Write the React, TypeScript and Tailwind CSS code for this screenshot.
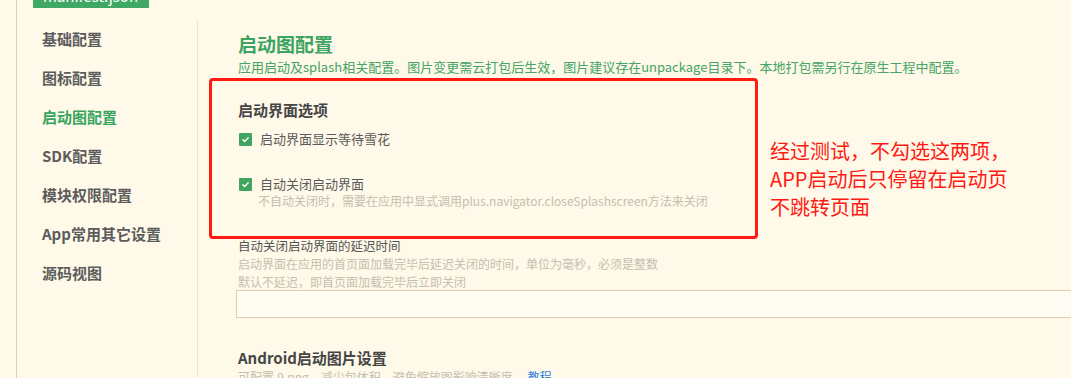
import React from "react";

const font = { fontFamily: '"Noto Sans CJK SC", "Noto Sans", sans-serif' };

function Check() {
  return (
    <span className="flex h-[13px] w-[13px] shrink-0 items-center justify-center rounded-[1px] bg-[#3fa561]">
      <svg width="9" height="9" viewBox="0 0 10 10" fill="none">
        <path d="M2 5.2 L4.1 7.2 L8 3" stroke="#fff" strokeWidth="1.5" strokeLinecap="round" strokeLinejoin="round" />
      </svg>
    </span>
  );
}

export default function App() {
  const nav = ["基础配置", "图标配置", "启动图配置", "SDK配置", "模块权限配置", "App常用其它设置", "源码视图"];
  return (
    <div className="relative flex h-[378px] w-[1071px] overflow-hidden bg-[#fef9e8]" style={font}>
      <div className="w-[17px] shrink-0 border-r border-[#ddd2ac]" />
      <div className="flex w-[180px] shrink-0 flex-col">
        <div className="ml-[16px] h-[8px] w-[116px] overflow-hidden bg-[#3fa864]">
          <div className="mt-[-14px] pl-[10px] text-[15px] leading-[20px] text-white">manifest.json</div>
        </div>
        <div className="flex flex-col pt-[12px]">
          {nav.map((n, i) => (
            <div
              key={n}
              className={`flex h-[39px] items-center pl-[25px] text-[15px] font-bold ${i === 2 ? "text-[#37a460]" : "text-[#5c5c5c]"}`}
            >
              {n}
            </div>
          ))}
        </div>
      </div>
      <div className="mt-[20px] w-px shrink-0 bg-[#efe6cc]" />
      <div className="flex min-w-0 flex-1 flex-col pl-[40px] pt-[31px]">
        <div className="text-[19px] font-bold leading-[26px] text-[#3ba461]">启动图配置</div>
        <div className="mt-[1px] whitespace-nowrap text-[13px] leading-[18px] text-[#45a466]">
          应用启动及splash相关配置。图片变更需云打包后生效，图片建议存在unpackage目录下。本地打包需另行在原生工程中配置。
        </div>
        <div className="mt-[24px] text-[15px] font-bold leading-[20px] text-[#454545]">启动界面选项</div>
        <div className="mt-[10px] flex h-[18px] items-center gap-[8px] pl-[1px]">
          <Check />
          <span className="text-[13px] text-[#5a5a5a]">启动界面显示等待雪花</span>
        </div>
        <div className="mt-[27px] flex h-[18px] items-center gap-[8px] pl-[1px]">
          <Check />
          <span className="text-[13px] text-[#5a5a5a]">自动关闭启动界面</span>
        </div>
        <div className="pl-[20px] text-[12px] leading-[16px] text-[#c4bfb0]">
          不自动关闭时，需要在应用中显式调用plus.navigator.closeSplashscreen方法来关闭
        </div>
        <div className="mt-[28px] text-[12.5px] leading-[18px] text-[#555]">自动关闭启动界面的延迟时间</div>
        <div className="text-[12px] leading-[18px] text-[#c4bfb0]">启动界面在应用的首页面加载完毕后延迟关闭的时间，单位为毫秒，必须是整数</div>
        <div className="text-[12px] leading-[18px] text-[#c4bfb0]">默认不延迟，即首页面加载完毕后立即关闭</div>
        <div className="ml-[-2px] mt-[-1px] h-[28px] w-[900px] shrink-0 border border-[#dbd0a8] bg-[#fffcf3]" />
        <div className="mt-[30px] text-[15px] font-bold leading-[20px] text-[#454545]">Android启动图片设置</div>
        <div className="whitespace-nowrap text-[12px] leading-[18px] text-[#c4bfb0]">
          可配置.9.png，减少包体积，避免缩放图影响清晰度。 <span className="text-[#2f7fe0]">教程</span>
        </div>
      </div>

      <div className="pointer-events-none absolute left-[209px] top-[78px] h-[161px] w-[549px] rounded-[4px] border-[3px] border-[#ff1a14]" />
      <div className="absolute left-[770px] top-[137px] text-[20px] leading-[28px] text-[#ff1a14]">
        <div>经过测试，不勾选这两项，</div>
        <div>APP启动后只停留在启动页</div>
        <div>不跳转页面</div>
      </div>
    </div>
  );
}
